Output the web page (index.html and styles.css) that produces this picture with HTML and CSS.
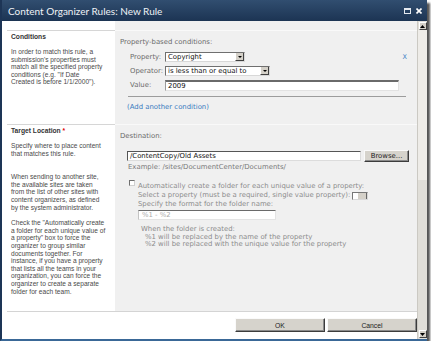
FILE: index.html
```html
<!DOCTYPE html>
<html lang="en">
<head>
    <meta charset="UTF-8">
    <title>Content Organizer Rules: New Rule</title>
    <link rel="stylesheet" href="styles.css">
</head>
<body>
    <div class="window">
        <div class="titlebar">
            <span class="title">Content Organizer Rules: New Rule</span>
            <span class="titleIcons">
                <svg class="tbIcon" width="7" height="6" viewBox="0 0 7 6"><rect x="0.5" y="0.5" width="6" height="5" fill="none" stroke="#e4e9ef"/><rect x="0" y="0" width="7" height="2" fill="#e4e9ef"/></svg>
                <svg class="tbIcon" width="6" height="6" viewBox="0 0 6 6"><path d="M0.5 0.5 L5.5 5.5 M5.5 0.5 L0.5 5.5" stroke="#fff" stroke-width="1.6"/></svg>
            </span>
        </div>

        <div class="client">
            <div class="page">
                <div class="sections">
                    <div class="section">
                        <div class="sectionHead">
                            <div class="sectionTitle">Conditions</div>
                            <p class="sectionDesc">In order to match this rule, a<br>submission's properties must<br>match all the specified property<br>conditions (e.g. "If Date<br>Created is before 1/1/2000").</p>
                        </div>
                        <div class="sectionBody">
                            <div class="fieldTitle">Property-based conditions:</div>
                            <div class="conditions">
                                <div class="condRow">
                                    <span class="condLabel">Property:</span>
                                    <span class="select selProperty"><span class="selText">Copyright</span><span class="selBtn"></span></span>
                                    <span class="removeX">X</span>
                                </div>
                                <div class="condRow">
                                    <span class="condLabel">Operator:</span>
                                    <span class="select selOperator"><span class="selText">is less than or equal to</span><span class="selBtn"></span></span>
                                </div>
                                <div class="condRow">
                                    <span class="condLabel">Value:</span>
                                    <span class="valueInput">2009</span>
                                </div>
                            </div>
                            <div class="addLink">(Add another condition)</div>
                        </div>
                    </div>

                    <div class="section sectionGrow">
                        <div class="sectionHead">
                            <div class="sectionTitle">Target Location <span class="required">*</span></div>
                            <p class="sectionDesc">Specify where to place content<br>that matches this rule.</p>
                            <p class="sectionDesc paraWide">When sending to another site,<br>the available sites are taken<br>from the list of other sites with<br>content organizers, as defined<br>by the system administrator.</p>
                            <p class="sectionDesc paraNarrow">Check the "Automatically create<br>a folder for each unique value of<br>a property" box to force the<br>organizer to group similar<br>documents together. For<br>instance, if you have a property<br>that lists all the teams in your<br>organization, you can force the<br>organizer to create a separate<br>folder for each team.</p>
                        </div>
                        <div class="sectionBody">
                            <div class="fieldTitle">Destination:</div>
                            <div class="destRow">
                                <span class="textInput">/ContentCopy/Old Assets</span>
                                <span class="button browseBtn">Browse...</span>
                            </div>
                            <div class="example">Example: /sites/DocumentCenter/Documents/</div>
                            <div class="autoRow">
                                <span class="checkbox"></span>
                                <span class="disabledText">Automatically create a folder for each unique value of a property:</span>
                            </div>
                            <div class="autoOptions">
                                <div class="propRow">Select a property (must be a required, single value property):<span class="miniSelect"><span class="miniBtn"></span></span></div>
                                <div>Specify the format for the folder name:</div>
                                <div class="formatInput">%1 - %2</div>
                                <div class="hint">When the folder is created:</div>
                                <div class="hintItem">%1 will be replaced by the name of the property</div>
                                <div class="hintItem">%2 will be replaced with the unique value for the property</div>
                            </div>
                        </div>
                    </div>
                </div>

                <div class="footer">
                    <span class="button dlgBtn">OK</span>
                    <span class="button dlgBtn">Cancel</span>
                </div>
            </div>

            <div class="scrollbar">
                <span class="scrollBtn"><svg width="5" height="3" viewBox="0 0 5 3"><path d="M2.5 0 L5 3 L0 3 Z" fill="#000"/></svg></span>
                <span class="scrollThumb"></span>
                <span class="scrollTrack"></span>
                <span class="scrollBtn"><svg width="5" height="3" viewBox="0 0 5 3"><path d="M0 0 L5 0 L2.5 3 Z" fill="#000"/></svg></span>
            </div>
        </div>
    </div>
</body>
</html>
```

FILE: styles.css
```css
body{
    margin: 0;
    background-color: #fff;
    font-family: "DejaVu Sans", Verdana, sans-serif;
}

.window{
    width: 425px;
    height: 339px;
    border-left: 2px solid #1d3556;
    border-bottom: 2px solid #3a6897;
    box-shadow: 3px 3px 2px #555;
    display: flex;
    flex-direction: column;
}

.titlebar{
    height: 21px;
    flex-shrink: 0;
    background: linear-gradient(#314e70, #1c3453);
    display: flex;
    align-items: center;
    justify-content: space-between;
    padding: 0 5px 0 6px;
}

.title{
    font-family: Lato, "Liberation Sans", sans-serif;
    font-size: 10px;
    color: #eef2f6;
}

.titleIcons{
    display: flex;
    gap: 5px;
    align-items: center;
}

.tbIcon{
    display: block;
}

.client{
    flex: 1;
    display: flex;
}

.page{
    width: 415px;
    display: flex;
    flex-direction: column;
}

.sections{
    flex: 1;
    display: flex;
    flex-direction: column;
    padding-top: 9px;
    background: linear-gradient(to right, #fff 113px, #f0f0f0 113px);
}

.section{
    display: grid;
    grid-template-columns: 113px 302px;
}

.sectionGrow{
    flex: 1;
}

/* left column */
.sectionHead{
    margin-left: 5px;
    border-top: 1px solid #d6d6d6;
    padding: 2px 4px 0 4px;
    font-family: "Liberation Sans", Arial, sans-serif;
}

.sectionTitle{
    font-weight: bold;
    font-size: 6.7px;
    line-height: 8px;
    color: #333;
}

.required{
    color: #d00;
}

.sectionDesc{
    margin: 7px 0 0 0;
    font-size: 6.6px;
    line-height: 7.6px;
    color: #4a4a4a;
}

.paraWide{
    margin-top: 16px;
}

.paraNarrow{
    margin-top: 8px;
}

/* right column */
.sectionBody{
    border-top: 1px solid #f9f9f9;
    padding: 7px 8px 12px 5px;
    font-size: 6.9px;
    line-height: 9px;
    color: #6a6a6a;
}

.conditions{
    margin: 5px 3px 0 8px;
    padding: 0 0 5px 2px;
    border-bottom: 1px solid #9c9c9c;
}

.condRow{
    display: flex;
    align-items: center;
    height: 10px;
    margin-bottom: 4px;
}

.condRow:last-child{
    height: 11px;
    margin-bottom: 0;
}

.condLabel{
    width: 35px;
}

.select{
    box-sizing: border-box;
    height: 10px;
    display: flex;
    align-items: stretch;
    background-color: #fff;
    border: 1px solid;
    border-color: #6f6f6f #d8d8d8 #d8d8d8 #6f6f6f;
    color: #111;
}

.selProperty{
    width: 80px;
}

.selOperator{
    width: 105px;
}

.selText{
    flex: 1;
    padding-left: 2px;
    line-height: 8px;
    white-space: nowrap;
    overflow: hidden;
}

.selBtn{
    width: 7px;
    background: #d4d0c8;
    border-left: 1px solid #fff;
    border-right: 1px solid #404040;
    border-bottom: 1px solid #404040;
    position: relative;
}

.selBtn::after{
    content: "";
    position: absolute;
    left: 2px;
    top: 3px;
    border-left: 2px solid transparent;
    border-right: 2px solid transparent;
    border-top: 2px solid #000;
}

.removeX{
    margin-left: auto;
    margin-right: -1px;
    color: #3b7fc4;
    font-size: 6.5px;
}

.valueInput{
    box-sizing: border-box;
    width: 234px;
    height: 11px;
    padding-left: 2px;
    line-height: 8px;
    background-color: #fff;
    border: 1px solid;
    border-top: 2px solid #6a6a6a;
    border-color: #6a6a6a #e2e2e2 #e2e2e2 #9a9a9a;
    color: #111;
}

.addLink{
    margin: 6px 0 0 7px;
    color: #3a7bbf;
}

.destRow{
    margin: 9px 0 0 7px;
    display: flex;
    align-items: center;
    gap: 3px;
}

.textInput{
    box-sizing: border-box;
    width: 234px;
    height: 10px;
    padding-left: 2px;
    line-height: 8px;
    background-color: #fff;
    border: 1px solid;
    border-color: #555 #dcdcdc #dcdcdc #555;
    color: #111;
}

.button{
    box-sizing: border-box;
    display: flex;
    align-items: center;
    justify-content: center;
    background-color: #d6d3cc;
    border: 1px solid;
    border-color: #fafafa #3c3c3c #3c3c3c #fafafa;
    box-shadow: inset -1px -1px 0 #8a8a8a;
    color: #222;
    font-family: "Liberation Sans", Arial, sans-serif;
}

.browseBtn{
    width: 45px;
    height: 12px;
    font-family: "DejaVu Sans", Verdana, sans-serif;
    font-size: 6.9px;
}

.example{
    margin: 1px 0 0 8px;
    color: #7a7a7a;
}

.autoRow{
    margin: 10px 0 0 9px;
    display: flex;
    gap: 3px;
}

.checkbox{
    box-sizing: border-box;
    width: 6px;
    height: 6px;
    margin-top: -2px;
    background-color: #fff;
    border: 1px solid;
    border-color: #6f6f6f #d0d0d0 #d0d0d0 #6f6f6f;
}

.disabledText, .autoOptions{
    color: #8c8c8c;
}

.autoOptions{
    margin-left: 18px;
}

.propRow{
    display: flex;
    align-items: center;
    gap: 2px;
}

.miniSelect{
    box-sizing: border-box;
    width: 16px;
    height: 8px;
    display: flex;
    justify-content: flex-end;
    background-color: #fff;
    border: 1px solid;
    border-color: #777 #d8d8d8 #d8d8d8 #777;
}

.miniBtn{
    width: 8px;
    background: #d4d0c8;
    border-right: 1px solid #666;
}

.formatInput{
    box-sizing: border-box;
    width: 138px;
    height: 10px;
    margin-top: 1px;
    padding-left: 3px;
    line-height: 8px;
    background-color: #fff;
    border: 1px solid;
    border-color: #6a6a6a #e4e4e4 #e4e4e4 #c4c4c4;
    color: #ababab;
}

.hint{
    margin: 6px 0 0 3px;
    line-height: 7.7px;
}

.hintItem{
    margin-left: 7px;
    line-height: 7.7px;
}

.footer{
    height: 28px;
    box-sizing: border-box;
    margin-left: 5px;
    border-top: 1px solid #d4d4d4;
    padding-top: 6px;
    display: flex;
    justify-content: flex-end;
    gap: 2px;
}

.dlgBtn{
    width: 90px;
    height: 14px;
    font-size: 6.8px;
}

.scrollbar{
    width: 10px;
    box-sizing: border-box;
    border-left: 1px solid #cbc9c3;
    background-color: #e0ded8;
    display: flex;
    flex-direction: column;
    align-items: center;
    padding: 1px 0;
}

.scrollBtn{
    box-sizing: border-box;
    width: 8px;
    height: 8px;
    display: flex;
    align-items: center;
    justify-content: center;
    background-color: #d4d0c8;
    border: 1px solid;
    border-color: #fff #404040 #404040 #fff;
}

.scrollThumb{
    width: 9px;
    height: 150px;
    background-color: #eeece8;
}

.scrollTrack{
    flex: 1;
}
```
